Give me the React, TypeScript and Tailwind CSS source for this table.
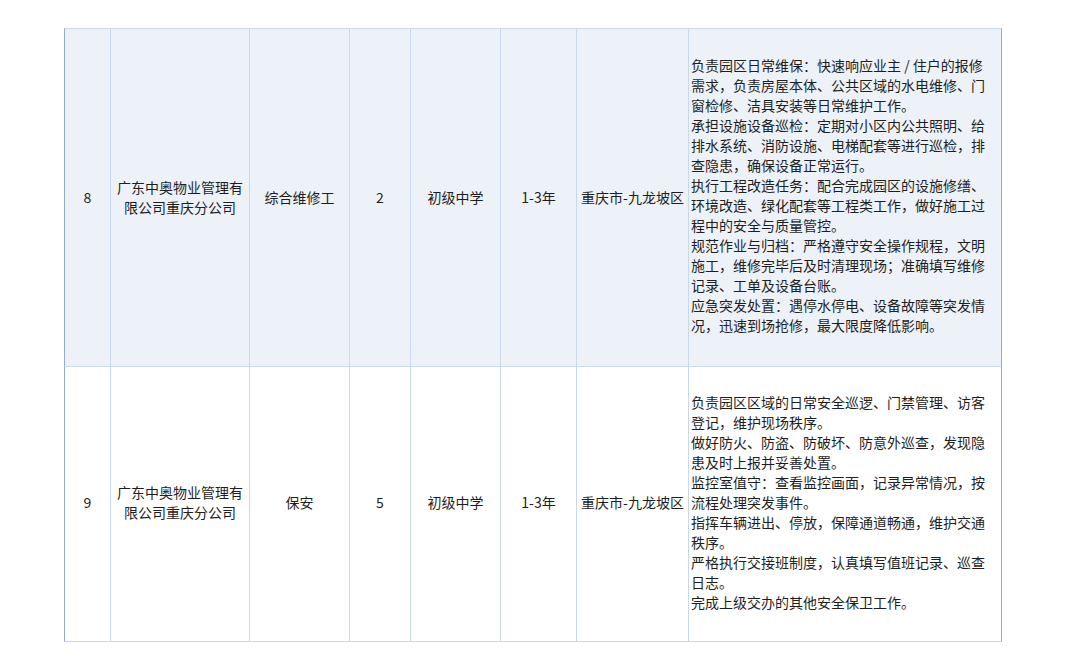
import React from "react";

type Row = {
  no: string;
  company: string;
  job: string;
  count: string;
  edu: string;
  exp: string;
  place: string;
  duties: string[];
  bg: string;
  h: string;
  pad: string;
};

const rows: Row[] = [
  {
    no: "8",
    company: "广东中奥物业管理有限公司重庆分公司",
    job: "综合维修工",
    count: "2",
    edu: "初级中学",
    exp: "1-3年",
    place: "重庆市-九龙坡区",
    duties: [
      "负责园区日常维保：快速响应业主 / 住户的报修需求，负责房屋本体、公共区域的水电维修、门窗检修、洁具安装等日常维护工作。",
      "承担设施设备巡检：定期对小区内公共照明、给排水系统、消防设施、电梯配套等进行巡检，排查隐患，确保设备正常运行。",
      "执行工程改造任务：配合完成园区的设施修缮、环境改造、绿化配套等工程类工作，做好施工过程中的安全与质量管控。",
      "规范作业与归档：严格遵守安全操作规程，文明施工，维修完毕后及时清理现场；准确填写维修记录、工单及设备台账。",
      "应急突发处置：遇停水停电、设备故障等突发情况，迅速到场抢修，最大限度降低影响。",
    ],
    bg: "bg-[#edf2f9]",
    h: "h-[339px]",
    pad: "pb-[6px]",
  },
  {
    no: "9",
    company: "广东中奥物业管理有限公司重庆分公司",
    job: "保安",
    count: "5",
    edu: "初级中学",
    exp: "1-3年",
    place: "重庆市-九龙坡区",
    duties: [
      "负责园区区域的日常安全巡逻、门禁管理、访客登记，维护现场秩序。",
      "做好防火、防盗、防破坏、防意外巡查，发现隐患及时上报并妥善处置。",
      "监控室值守：查看监控画面，记录异常情况，按流程处理突发事件。",
      "指挥车辆进出、停放，保障通道畅通，维护交通秩序。",
      "严格执行交接班制度，认真填写值班记录、巡查日志。",
      "完成上级交办的其他安全保卫工作。",
    ],
    bg: "bg-white",
    h: "h-[275px]",
    pad: "pb-[4px]",
  },
];

const cell = "border-r border-b border-[#c9d8ed] align-middle text-center px-0";

export default function App() {
  return (
    <div className="min-h-[660px] bg-white pt-[28px] pl-[64px] font-['Noto_Sans_CJK_SC','Noto_Sans',sans-serif] text-[14px] leading-[20px] text-[#1e1e1e]">
      <table className="table-fixed border-separate border-spacing-0 w-[938px]">
        <colgroup>
          <col className="w-[47px]" />
          <col className="w-[139px]" />
          <col className="w-[100px]" />
          <col className="w-[61px]" />
          <col className="w-[90px]" />
          <col className="w-[76px]" />
          <col className="w-[112px]" />
          <col className="w-[313px]" />
        </colgroup>
        <tbody>
          {rows.map((r, i) => {
            const top = i === 0 ? "border-t" : "";
            const p = i === 0 ? "pb-[2px]" : "pb-[4px]";
            return (
              <tr key={r.no} className={`${r.bg} ${r.h}`}>
                <td className={`${cell} ${top} ${p} border-l border-l-[#8fabd8]`}>{r.no}</td>
                <td className={`${cell} ${top} ${p}`}>{r.company}</td>
                <td className={`${cell} ${top} ${p}`}>{r.job}</td>
                <td className={`${cell} ${top} ${p}`}>{r.count}</td>
                <td className={`${cell} ${top} ${p}`}>{r.edu}</td>
                <td className={`${cell} ${top} ${p}`}>{r.exp}</td>
                <td className={`${cell} ${top} ${p} whitespace-nowrap`}>{r.place}</td>
                <td
                  className={`border-b border-r border-[#c9d8ed] border-r-[#8fabd8] ${top} align-middle text-left pl-[2px] pr-[8px] ${r.pad}`}
                >
                  {r.duties.map((d) => (
                    <p key={d}>{d}</p>
                  ))}
                </td>
              </tr>
            );
          })}
        </tbody>
      </table>
    </div>
  );
}
